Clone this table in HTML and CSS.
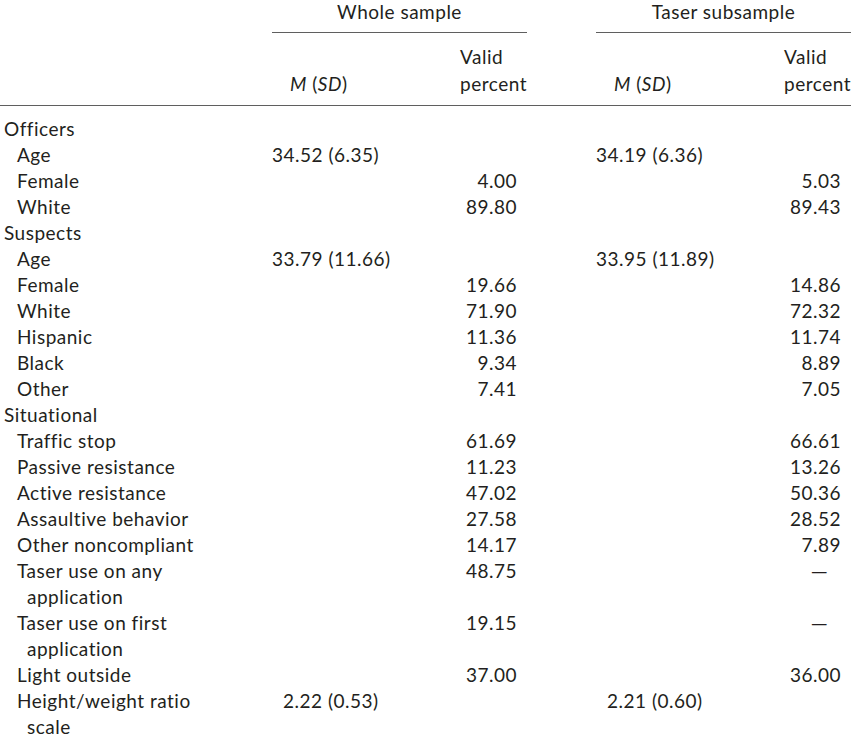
FILE: index.html
```html
<!DOCTYPE html>
<html lang="en">
<head>
<meta charset="utf-8">
<title>Descriptive statistics</title>
<link rel="stylesheet" href="styles.css">
</head>
<body>
<table class="stats">
  <colgroup>
    <col class="c-label">
    <col class="c-m">
    <col class="c-v">
    <col class="c-gap">
    <col class="c-m">
    <col class="c-v2">
  </colgroup>
  <thead>
    <tr class="h1">
      <th></th>
      <th colspan="2" class="span">Whole sample</th>
      <th></th>
      <th colspan="2" class="span">Taser subsample</th>
    </tr>
    <tr class="h2">
      <th></th>
      <th class="hm"><i>M</i> (<i>SD</i>)</th>
      <th class="hv"><span class="stack">Valid<br>percent</span></th>
      <th></th>
      <th class="hm"><i>M</i> (<i>SD</i>)</th>
      <th class="hv"><span class="stack">Valid<br>percent</span></th>
    </tr>
  </thead>
  <tbody>
    <tr class="first"><td class="cat">Officers</td><td></td><td></td><td></td><td></td><td></td></tr>
    <tr><td class="sub">Age</td><td class="m">34.52 (6.35)</td><td></td><td></td><td class="m">34.19 (6.36)</td><td></td></tr>
    <tr><td class="sub">Female</td><td></td><td class="v">4.00</td><td></td><td></td><td class="v">5.03</td></tr>
    <tr><td class="sub">White</td><td></td><td class="v">89.80</td><td></td><td></td><td class="v">89.43</td></tr>
    <tr><td class="cat">Suspects</td><td></td><td></td><td></td><td></td><td></td></tr>
    <tr><td class="sub">Age</td><td class="m">33.79 (11.66)</td><td></td><td></td><td class="m">33.95 (11.89)</td><td></td></tr>
    <tr><td class="sub">Female</td><td></td><td class="v">19.66</td><td></td><td></td><td class="v">14.86</td></tr>
    <tr><td class="sub">White</td><td></td><td class="v">71.90</td><td></td><td></td><td class="v">72.32</td></tr>
    <tr><td class="sub">Hispanic</td><td></td><td class="v">11.36</td><td></td><td></td><td class="v">11.74</td></tr>
    <tr><td class="sub">Black</td><td></td><td class="v">9.34</td><td></td><td></td><td class="v">8.89</td></tr>
    <tr><td class="sub">Other</td><td></td><td class="v">7.41</td><td></td><td></td><td class="v">7.05</td></tr>
    <tr><td class="cat">Situational</td><td></td><td></td><td></td><td></td><td></td></tr>
    <tr><td class="sub">Traffic stop</td><td></td><td class="v">61.69</td><td></td><td></td><td class="v">66.61</td></tr>
    <tr><td class="sub">Passive resistance</td><td></td><td class="v">11.23</td><td></td><td></td><td class="v">13.26</td></tr>
    <tr><td class="sub">Active resistance</td><td></td><td class="v">47.02</td><td></td><td></td><td class="v">50.36</td></tr>
    <tr><td class="sub">Assaultive behavior</td><td></td><td class="v">27.58</td><td></td><td></td><td class="v">28.52</td></tr>
    <tr><td class="sub">Other noncompliant</td><td></td><td class="v">14.17</td><td></td><td></td><td class="v">7.89</td></tr>
    <tr><td class="sub">Taser use on any<br>application</td><td></td><td class="v">48.75</td><td></td><td></td><td class="v dash">—</td></tr>
    <tr><td class="sub">Taser use on first<br>application</td><td></td><td class="v">19.15</td><td></td><td></td><td class="v dash">—</td></tr>
    <tr><td class="sub">Light outside</td><td></td><td class="v">37.00</td><td></td><td></td><td class="v">36.00</td></tr>
    <tr><td class="sub">Height/weight ratio<br>scale</td><td class="m shift">2.22 (0.53)</td><td></td><td></td><td class="m shift">2.21 (0.60)</td><td></td></tr>
  </tbody>
</table>
</body>
</html>
```

FILE: styles.css
```css
html, body {
  margin: 0;
  padding: 0;
  background: #ffffff;
}

body {
  font-family: "Lato", "Open Sans", "DejaVu Sans", sans-serif;
  font-size: 19px;
  letter-spacing: 0.5px;
  color: #231f20;
}

.stats {
  width: 851px;
  table-layout: fixed;
  border-collapse: collapse;
  border-spacing: 0;
}

.c-label { width: 272px; }
.c-m { width: 158px; }
.c-v { width: 97px; }
.c-gap { width: 69px; }
.c-v2 { width: 97px; }

.stats th,
.stats td {
  padding: 0;
  font-weight: normal;
  vertical-align: top;
  line-height: 26px;
}

.h1 th {
  height: 32px;
  line-height: 24px;
  padding-bottom: 8px;
  box-sizing: border-box;
  text-align: center;
  vertical-align: top;
}

.h1 th.span {
  border-bottom: 1.5px solid #5f5f5f;
}

.h2 th {
  border-bottom: 1.5px solid #5f5f5f;
  padding-top: 10px;
  padding-bottom: 8px;
  line-height: 27px;
  vertical-align: bottom;
}

.h2 th.hm {
  text-align: left;
  padding-left: 18px;
}

.h2 th.hv {
  text-align: right;
}

.stack {
  display: inline-block;
  text-align: left;
}

.first td {
  padding-top: 10px;
}

.cat {
  padding-left: 4px !important;
}

.sub {
  padding-left: 27px !important;
  text-indent: -10px;
}

.m {
  text-align: left;
  white-space: nowrap;
}

.m.shift {
  padding-left: 11px !important;
}

.v {
  text-align: right;
  padding-right: 10px !important;
}

.v.dash {
  padding-right: 23px !important;
  letter-spacing: 0;
  font-size: 22px;
}
```
